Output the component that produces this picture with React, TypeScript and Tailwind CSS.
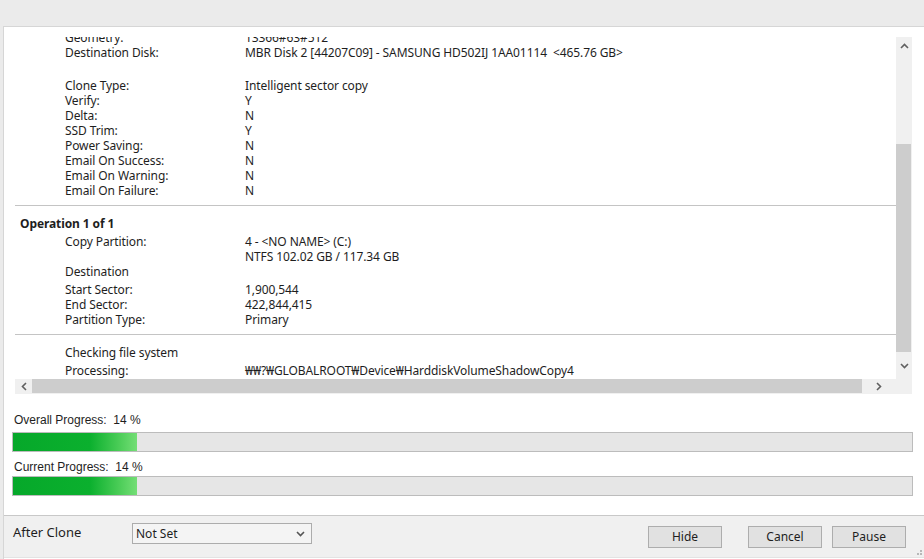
import React from 'react';

type Row = { label: string; value?: string; mt?: string };

function ChevronUp() {
  return (
    <svg width="9" height="6" viewBox="0 0 9 6" fill="none" stroke="#606060" strokeWidth={1.6}>
      <path d="M1 5L4.5 1.5L8 5" />
    </svg>
  );
}

function ChevronDown({ color = '#606060' }: { color?: string }) {
  return (
    <svg width="9" height="6" viewBox="0 0 9 6" fill="none" stroke={color} strokeWidth={1.6}>
      <path d="M1 1L4.5 4.5L8 1" />
    </svg>
  );
}

function ChevronLeft() {
  return (
    <svg width="6" height="9" viewBox="0 0 6 9" fill="none" stroke="#606060" strokeWidth={1.6}>
      <path d="M5 1L1.5 4.5L5 8" />
    </svg>
  );
}

function ChevronRight() {
  return (
    <svg width="6" height="9" viewBox="0 0 6 9" fill="none" stroke="#606060" strokeWidth={1.6}>
      <path d="M1 1L4.5 4.5L1 8" />
    </svg>
  );
}

function InfoRow({ label, value, mt = '' }: Row) {
  return (
    <div className={`flex h-[15px] leading-[15px] whitespace-pre ${mt}`}>
      <div className="w-[230px] shrink-0 pl-[50px]">{label}</div>
      <div>{value}</div>
    </div>
  );
}

function ProgressBar({ label, pct, barGap }: { label: string; pct: number; barGap: string }) {
  return (
    <div>
      <div className="h-[15px] leading-[15px] pl-[10px] whitespace-pre text-[12px]">{label}</div>
      <div className={`${barGap} ml-[8px] mr-[11px] h-[20px] border border-[#bcbcbc] bg-[#e6e6e6]`}>
        <div
          className="h-full bg-[linear-gradient(to_right,#06a82a_0%,#0bb02e_62%,#4ccd58_86%,#74de76_100%)]"
          style={{ width: `${pct}%` }}
        />
      </div>
    </div>
  );
}

export default function App() {
  return (
    <div className="w-[924px] h-[559px] bg-[#ebebeb] flex flex-col font-['Noto_Sans',sans-serif] text-[12px] text-[#1e1e1e] overflow-hidden">
      {/* top strip */}
      <div className="h-[26px] shrink-0" />

      <div className="flex-1 ml-[3px] border-l border-t border-[#d6d6d6] bg-white flex flex-col">
        {/* log viewer */}
        <div className="mt-[10px] ml-[11px] mr-[12px] grid grid-cols-[1fr_16px] grid-rows-[342px_15px]">
          <div className="overflow-hidden">
            <div className="-mt-[7px] tracking-[-0.1px]">
              <InfoRow label="Geometry:" value="13366#63#512" />
              <InfoRow label="Destination Disk:" value="MBR Disk 2 [44207C09] - SAMSUNG HD502IJ 1AA01114  <465.76 GB>" />
              <InfoRow label="Clone Type:" value="Intelligent sector copy" mt="mt-[18px]" />
              <InfoRow label="Verify:" value="Y" />
              <InfoRow label="Delta:" value="N" />
              <InfoRow label="SSD Trim:" value="Y" />
              <InfoRow label="Power Saving:" value="N" />
              <InfoRow label="Email On Success:" value="N" />
              <InfoRow label="Email On Warning:" value="N" />
              <InfoRow label="Email On Failure:" value="N" />
              <div className="mt-[7px] h-px bg-[#c4c4c4]" />
              <div className="mt-[10px] h-[15px] leading-[15px] pl-[5px] font-bold">Operation 1 of 1</div>
              <InfoRow label="Copy Partition:" value="4 - <NO NAME> (C:)" mt="mt-[3px]" />
              <InfoRow label="" value="NTFS 102.02 GB / 117.34 GB" />
              <InfoRow label="Destination" />
              <InfoRow label="Start Sector:" value="1,900,544" mt="mt-[3px]" />
              <InfoRow label="End Sector:" value="422,844,415" />
              <InfoRow label="Partition Type:" value="Primary" />
              <div className="mt-[7px] h-px bg-[#c4c4c4]" />
              <InfoRow label="Checking file system" mt="mt-[10px]" />
              <InfoRow label="Processing:" value="₩₩?₩GLOBALROOT₩Device₩HarddiskVolumeShadowCopy4" mt="mt-[3px]" />
            </div>
          </div>

          {/* vertical scrollbar */}
          <div className="bg-[#f0f0f0] flex flex-col">
            <div className="h-[17px] flex items-center justify-center"><ChevronUp /></div>
            <div className="h-[90px]" />
            <div className="h-[208px] mr-px bg-[#cdcdcd]" />
            <div className="flex-1 flex items-center justify-center"><ChevronDown /></div>
          </div>

          {/* horizontal scrollbar */}
          <div className="bg-[#f0f0f0] flex">
            <div className="w-[17px] flex items-center justify-center"><ChevronLeft /></div>
            <div className="w-[830px] bg-[#cdcdcd] mb-px" />
            <div className="flex-1 flex items-center justify-center"><ChevronRight /></div>
          </div>
          <div className="bg-[#f0f0f0]" />
        </div>

        {/* progress */}
        <div className="mt-[19px] flex flex-col gap-[8px] font-['Liberation_Sans',sans-serif]">
          <ProgressBar label="Overall Progress:  14 %" pct={13.8} barGap="mt-[4px]" />
          <ProgressBar label="Current Progress:  14 %" pct={13.8} barGap="mt-[1px]" />
        </div>
        <div className="flex-1" />

        {/* bottom bar */}
        <div className="h-[43px] border-t border-b border-[#c8c8c8] border-b-[#e3e3e3] bg-[#f0f0f0] flex items-start pl-[9px] pr-[18px] relative">
          <div className="w-[119px] mt-[8px] h-[16px] leading-[16px] text-[13px]">After Clone</div>
          <div className="mt-[7px] w-[180px] h-[21px] border border-[#acacac] bg-[#f4f4f4] flex items-center justify-between pl-[3px] pr-[6px]">
            <span>Not Set</span>
            <ChevronDown color="#555555" />
          </div>
          <div className="flex-1" />
          <div className="mt-[10px] flex items-center">
            <button className="w-[74px] h-[22px] border border-[#adadad] bg-[#e1e1e1] text-[12px]">Hide</button>
            <button className="ml-[26px] w-[74px] h-[22px] border border-[#adadad] bg-[#e1e1e1] text-[12px]">Cancel</button>
            <button className="ml-[10px] w-[74px] h-[22px] border border-[#adadad] bg-[#e1e1e1] text-[12px]">Pause</button>
          </div>
          <div className="absolute right-[2px] bottom-[2px] grid grid-cols-3 gap-px">
            <span />
            <span />
            <span className="w-[2px] h-[2px] bg-[#b8b8b8]" />
            <span />
            <span className="w-[2px] h-[2px] bg-[#b8b8b8]" />
            <span className="w-[2px] h-[2px] bg-[#b8b8b8]" />
          </div>
        </div>
        <div className="h-px" />
      </div>
    </div>
  );
}
